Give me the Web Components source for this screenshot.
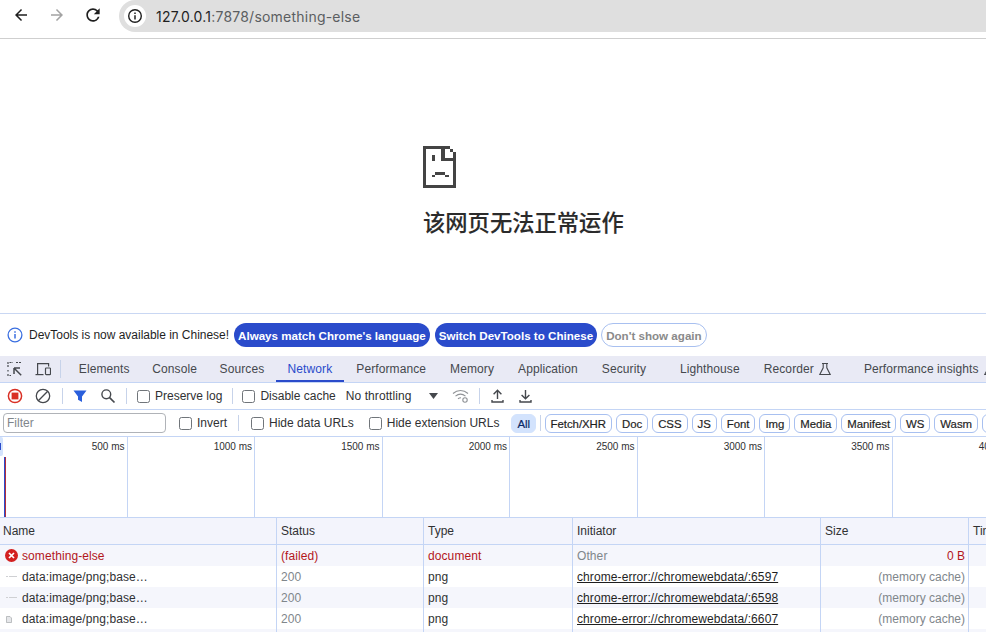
<!DOCTYPE html>
<html lang="en">
<head>
<meta charset="utf-8">
<title>something-else</title>
<style>
  html, body { margin: 0; height: 100%; background: #fff; overflow: hidden; }
  body { display: flex; flex-direction: column; width: 986px; height: 632px; font: 12px "Liberation Sans", Arial, sans-serif; color: #1f1f1f; }
</style>
</head>
<body>
<browser-bar url-host="127.0.0.1" url-rest=":7878/something-else"></browser-bar>
<error-page>该网页无法正常运作</error-page>
<info-bar></info-bar>
<dt-tabs></dt-tabs>
<net-toolbar></net-toolbar>
<net-filter></net-filter>
<net-overview></net-overview>
<net-table></net-table>

<script>
// small helper, every element just sets its own shadow markup
function shadow(el, css, html) {
  el.attachShadow({ mode: 'open' }).innerHTML = '<style>' + css + '</style>' + html;
}

class DtCheck extends HTMLElement {
  connectedCallback() {
    shadow(this, `
      :host { display: inline-flex; align-items: center; gap: 5px; white-space: nowrap; color: #303133; }
      i { display: block; width: 11px; height: 11px; border: 1px solid #70757a; border-radius: 2.5px; background: #fff; }
    `, '<i></i><slot></slot>');
  }
}
customElements.define('dt-check', DtCheck);

class TypeChip extends HTMLElement {
  connectedCallback() {
    shadow(this, `
      :host { display: block; flex: none; box-sizing: border-box; height: 19px; line-height: 18px; padding: 0 5px; border: 1px solid #a8c0f0; border-radius: 6px;
        font-size: 11.4px; letter-spacing: -0.03px; color: #1f1f1f; -webkit-text-stroke: 0.2px #1f1f1f; background: #fff; white-space: nowrap; }
      :host([on]) { background: #d3e3fd; border-color: #d3e3fd; color: #0b2a66; -webkit-text-stroke-color: #0b2a66; }
    `, '<slot></slot>');
  }
}
customElements.define('type-chip', TypeChip);

class BrowserBar extends HTMLElement {
  connectedCallback() {
    const host = this.getAttribute('url-host'), rest = this.getAttribute('url-rest');
    shadow(this, `
      :host { display: flex; flex: none; height: 38px; border-bottom: 1px solid #cfcfcf; box-sizing: content-box; background: #fff; }
      .nav { flex: none; width: 119px; display: flex; align-items: flex-start; }
      .nav svg { display: block; flex: none; margin-top: 6px; }
      .pill { flex: 1; height: 32px; background: #dfdfdf; border-radius: 16px 0 0 16px; display: flex; align-items: center; padding-left: 5px; }
      .dot { flex: none; width: 22px; height: 22px; border-radius: 50%; background: #fff; display: flex; align-items: center; justify-content: center; margin-right: 10px; }
      .url { font: 14px Inter, "Liberation Sans", sans-serif; color: #5b5e61; white-space: nowrap; letter-spacing: 0.22px; }
      .url b { font-weight: 400; color: #1f1f1f; }
    `, `
      <div class="nav">
        <svg width="18" height="18" viewBox="0 0 24 24" style="margin-left:12px" fill="#1f1f1f"><path d="M20 11H7.83l5.59-5.59L12 4l-8 8 8 8 1.41-1.41L7.83 13H20v-2z"/></svg>
        <svg width="18" height="18" viewBox="0 0 24 24" style="margin-left:18px" fill="#a3a3a3"><path d="M12 4l-1.41 1.41L16.17 11H4v2h12.17l-5.58 5.59L12 20l8-8z"/></svg>
        <svg width="20" height="20" viewBox="0 0 24 24" style="margin-left:17px;margin-top:5px" fill="#1f1f1f"><path d="M17.65 6.35A7.958 7.958 0 0 0 12 4c-4.42 0-7.99 3.58-7.99 8s3.57 8 7.99 8c3.73 0 6.84-2.55 7.73-6h-2.08A5.99 5.99 0 0 1 12 18c-3.31 0-6-2.69-6-6s2.69-6 6-6c1.66 0 3.14.69 4.22 1.78L13 11h7V4l-2.35 2.35z"/></svg>
      </div>
      <div class="pill">
        <div class="dot"><svg width="16" height="16" viewBox="0 0 16 16" fill="none" stroke="#1f1f1f" stroke-width="1.4"><circle cx="8" cy="8" r="6.3"/><path d="M8 7.2v4.2" stroke-width="1.5"/><path d="M8 4.4v1.6" stroke-width="1.5"/></svg></div>
        <div class="url"><b>${host}</b>${rest}</div>
      </div>`);
  }
}
customElements.define('browser-bar', BrowserBar);

class ErrorPage extends HTMLElement {
  connectedCallback() {
    shadow(this, `
      :host { display: block; flex: none; height: 274px; box-sizing: border-box; padding: 107px 0 0 423px; background: #fff; }
      svg { display: block; shape-rendering: crispEdges; }
      h1 { margin: 16px 0 0 0; font: 500 22.3px/34px "Noto Sans CJK SC", "Noto Sans", sans-serif; color: #2b2b2b; -webkit-text-stroke: 0.1px #2b2b2b; white-space: nowrap; }
    `, `
      <svg width="33" height="42" viewBox="0 0 33 42" fill="#444">
        <path d="M0 0h27v3h3v3h3v36H0zM3 3v36h27V15H18.3V3z"/>
        <path d="M21.7 3H27v3h3v6h-8.3z" fill="#fff"/>
        <path d="M9 9h3v6H9z"/>
        <path d="M12.3 26h10v3h-10zM9 29h3.3v2.4H9zM22.3 29h3.4v2.4h-3.4z"/>
      </svg>
      <h1><slot></slot></h1>`);
  }
}
customElements.define('error-page', ErrorPage);

class InfoBar extends HTMLElement {
  connectedCallback() {
    shadow(this, `
      :host { display: flex; flex: none; align-items: center; height: 43px; box-sizing: border-box; border-top: 1px solid #c9d7f3; background: #fff; padding-left: 7px; }
      svg { display: block; flex: none; margin-right: 6px; }
      span { color: #1f1f1f; white-space: nowrap; margin-right: 5px; letter-spacing: -0.02px; }
      button { flex: none; height: 24px; box-sizing: border-box; padding: 0 4px; margin: 0 5px 0 0; border: 0; border-radius: 12px; background: #2a4bcb; color: #fff;
        font: 700 11.6px "Liberation Sans", Arial, sans-serif; white-space: nowrap; }
      button + button { margin-right: 4px; }
      button.plain { background: #fff; color: #8a8a8a; border: 1px solid #a8c0f0; }
    `, `
      <svg width="16" height="16" viewBox="0 0 16 16" fill="none" stroke="#3b6fe0" stroke-width="1.3"><circle cx="8" cy="8" r="6.9"/><path d="M8 7v4.6M8 4.2v1.5" stroke-width="1.5"/></svg>
      <span>DevTools is now available in Chinese!</span>
      <button>Always match Chrome's language</button>
      <button>Switch DevTools to Chinese</button>
      <button class="plain">Don't show again</button>`);
  }
}
customElements.define('info-bar', InfoBar);

class DtTabs extends HTMLElement {
  connectedCallback() {
    shadow(this, `
      :host { display: flex; flex: none; height: 27px; box-sizing: border-box; background: #e9eaf5; border-bottom: 1px solid #c4d5f5; overflow: hidden; white-space: nowrap; }
      .ic { flex: none; display: flex; align-items: center; gap: 12px; padding: 0 9px 0 7px; }
      .sep { flex: none; width: 1px; height: 18px; margin: 4px 6.5px 0 0; background: #c7d3ea; }
      a { flex: none; display: flex; align-items: center; gap: 4px; height: 26px; box-sizing: border-box; padding: 0 11.3px; color: #45484d; letter-spacing: 0.1px; }
      a.on { color: #2a4bcb; border-bottom: 2px solid #2a4bcb; padding: 2px 12px 0; }
      a.on ~ a { padding: 0 12px; }
      a.on ~ a.wide { margin-left: 10px; }
      a.on ~ a.wide.last { margin-left: 8px; }
      svg { display: block; }
    `, `
      <div class="ic">
        <svg width="16" height="16" viewBox="0 0 16 16" fill="none" stroke="#45484d" stroke-width="1.2"><path d="M1 6V1.5h5M9 1.5h5.5M1 9v1.5M1 13v1.5h3" stroke-dasharray="2 1"/><path d="M7 7h6M7 7v6M7.2 7.2l7 7" stroke-width="1.5"/></svg>
        <svg width="16" height="16" viewBox="0 0 16 16" fill="none" stroke="#45484d" stroke-width="1.2"><path d="M2.6 13V2.6h11v3"/><path d="M.5 13.6h8"/><rect x="10.5" y="7" width="5" height="6.6" rx=".8"/></svg>
      </div>
      <div class="sep"></div>
      <a>Elements</a><a>Console</a><a>Sources</a><a class="on">Network</a><a>Performance</a><a>Memory</a><a>Application</a><a>Security</a>
      <a class="wide">Lighthouse</a>
      <a>Recorder <svg width="14" height="14" viewBox="0 0 14 14" fill="none" stroke="#45484d" stroke-width="1.1"><path d="M4 1.5h6M5.2 1.5v4.3L1.8 12.5h10.4L8.8 5.8V1.5"/></svg></a>
      <a class="wide last">Performance insights <svg width="14" height="14" viewBox="0 0 14 14" fill="none" stroke="#45484d" stroke-width="1.1"><path d="M4 1.5h6M5.2 1.5v4.3L1.8 12.5h10.4L8.8 5.8V1.5"/></svg></a>`);
  }
}
customElements.define('dt-tabs', DtTabs);

class NetToolbar extends HTMLElement {
  connectedCallback() {
    shadow(this, `
      :host { display: flex; flex: none; align-items: center; height: 27px; box-sizing: border-box; border-bottom: 1px solid #c4d5f5; background: #fff; padding-left: 7px; white-space: nowrap; }
      svg { display: block; flex: none; }
      .sep { flex: none; width: 1px; height: 16px; background: #c7d3ea; }
      .drop { color: #303133; }
    `, `
      <svg width="16" height="16" viewBox="0 0 16 16"><circle cx="8" cy="8" r="6.6" fill="none" stroke="#d93025" stroke-width="1.5"/><rect x="4.6" y="4.6" width="6.8" height="6.8" fill="#d93025"/></svg>
      <svg style="margin-left:12px" width="16" height="16" viewBox="0 0 16 16" fill="none" stroke="#45484d" stroke-width="1.3"><circle cx="8" cy="8" r="6.7"/><path d="M3.3 12.7 12.7 3.3"/></svg>
      <div class="sep" style="margin-left:11px"></div>
      <svg style="margin-left:9px" width="16" height="16" viewBox="0 0 16 16"><path d="M1.5 2.5h13L10 8.5V14L6 11.8V8.5z" fill="#2a5fdc"/></svg>
      <svg style="margin-left:12px" width="16" height="16" viewBox="0 0 16 16" fill="none" stroke="#45484d" stroke-width="1.4"><circle cx="6.3" cy="6.3" r="4.4"/><path d="M9.6 9.6 14.5 14.5" stroke-width="1.7"/></svg>
      <div class="sep" style="margin-left:10px"></div>
      <dt-check style="margin-left:10px">Preserve log</dt-check>
      <div class="sep" style="margin-left:10px"></div>
      <dt-check style="margin-left:9px">Disable cache</dt-check>
      <span class="drop" style="margin-left:10px;letter-spacing:.08px">No throttling</span>
      <svg style="margin-left:17px" width="9" height="6" viewBox="0 0 9 6"><path d="M0 0h9L4.5 6z" fill="#45484d"/></svg>
      <svg style="margin-left:14px" width="18" height="16" viewBox="0 0 18 16" fill="none" stroke="#8f9296" stroke-width="1.1"><path d="M1 5.5C5.5 1.5 11.5 1.5 16 5.5M3.5 8.2C6.5 5.7 10.5 5.7 13.5 8.2M6 10.8C7 10 8 9.8 9 9.8"/><circle cx="13" cy="12" r="2.2"/></svg>
      <div class="sep" style="margin-left:9px"></div>
      <svg style="margin-left:10px" width="15" height="16" viewBox="0 0 15 16" fill="none" stroke="#45484d" stroke-width="1.4"><path d="M7.5 11V2.5M3.6 6.2 7.5 2.3l3.9 3.9M2 12v2h11v-2"/></svg>
      <svg style="margin-left:13px" width="15" height="16" viewBox="0 0 15 16" fill="none" stroke="#45484d" stroke-width="1.4"><path d="M7.5 2v8.6M3.6 6.9l3.9 3.9 3.9-3.9M2 12v2h11v-2"/></svg>`);
  }
}
customElements.define('net-toolbar', NetToolbar);

class NetFilter extends HTMLElement {
  connectedCallback() {
    shadow(this, `
      :host { display: flex; flex: none; align-items: center; height: 27px; box-sizing: border-box; border-bottom: 1px solid #c4d5f5; background: #fff; padding-left: 3px; white-space: nowrap; overflow: hidden; }
      .inp { flex: none; box-sizing: border-box; width: 163px; height: 20px; line-height: 18px; border: 1px solid #b0b3b8; border-radius: 4px; padding-left: 3px; color: #80868b; }
      .sep { flex: none; width: 1px; height: 16px; background: #c7d3ea; }
      .chips { display: flex; gap: 4px; margin-left: 10px; align-items: center; }
    `, `
      <div class="inp">Filter</div>
      <dt-check style="margin-left:13px">Invert</dt-check>
      <div class="sep" style="margin-left:11px"></div>
      <dt-check style="margin-left:12px">Hide data URLs</dt-check>
      <dt-check style="margin-left:15px">Hide extension URLs</dt-check>
      <type-chip on style="margin-left:12px">All</type-chip>
      <div class="sep" style="margin-left:4px"></div>
      <div class="chips" style="margin-left:3.5px">
        <type-chip>Fetch/XHR</type-chip><type-chip>Doc</type-chip><type-chip>CSS</type-chip><type-chip>JS</type-chip><type-chip>Font</type-chip><type-chip>Img</type-chip><type-chip>Media</type-chip><type-chip>Manifest</type-chip><type-chip>WS</type-chip><type-chip>Wasm</type-chip><type-chip>Other</type-chip>
      </div>`);
  }
}
customElements.define('net-filter', NetFilter);

class NetOverview extends HTMLElement {
  connectedCallback() {
    const cells = [500, 1000, 1500, 2000, 2500, 3000, 3500, 4000]
      .map(ms => `<div class="cell">${ms} ms</div>`).join('');
    shadow(this, `
      :host { display: flex; flex: none; position: relative; height: 81px; box-sizing: border-box; border-bottom: 1px solid #c4d5f5; background: #fff; overflow: hidden; }
      .cell { flex: none; width: 127.5px; box-sizing: border-box; border-right: 1px solid #c4d5f5; padding: 4px 2px 0 0; text-align: right; font-size: 10px; line-height: 12px; color: #303133; white-space: nowrap; }
      .cell:first-child { margin-left: -1px; }
      .handle { position: absolute; left: -2px; top: 0; width: 5px; height: 19px; background: #d3e3fd; border-radius: 2px; }
      .handle::after { content: ""; position: absolute; left: 0; top: 6px; width: 3px; height: 7px; background: #2a4bcb; }
      .bar { position: absolute; left: 4px; top: 20px; bottom: 0; width: 1px; background: #2a4bcb; border-right: 1px solid #b03040; }
    `, cells + '<div class="handle"></div><div class="bar"></div>');
  }
}
customElements.define('net-overview', NetOverview);

class NetRow extends HTMLElement {
  connectedCallback() {
    const a = n => this.getAttribute(n);
    const icons = {
      err: '<svg width="13" height="13" viewBox="0 0 13 13"><circle cx="6.5" cy="6.5" r="6.5" fill="#d32020"/><path d="M4 4l5 5M9 4 4 9" stroke="#fff" stroke-width="1.7"/></svg>',
      line: '<svg width="13" height="13" viewBox="0 0 13 13"><path d="M1 6.5h2M4 6.5h8" stroke="#cfd0d3"/></svg>',
      doc: '<svg width="13" height="13" viewBox="0 0 13 13"><path d="M1.5 4.5h3.5l1.5 1.5v4.5h-5z" fill="#e6e7ea" stroke="#a5a7aa" stroke-width=".7"/></svg>'
    };
    shadow(this, `
      :host { display: grid; grid-template-columns: 277px 147px 149px 248px 148px 1fr; height: 21px; line-height: 22px; color: #303133; background: #fff; white-space: nowrap; letter-spacing: 0.09px; }
      :host([alt]) { background: #f5f6fc; }
      div { box-sizing: border-box; height: 21px; padding-left: 4px; border-right: 1px solid #c4d5f5; overflow: hidden; }
      div:last-child { border-right: 0; }
      .name { display: flex; align-items: center; padding-left: 5px; gap: 4px; }
      .name svg { display: block; flex: none; }
      .dim { color: #80868b; }
      .size { text-align: right; padding: 0 3px 0 0; color: #80868b; letter-spacing: 0; }
      .link { text-decoration: underline; color: #1f1f1f; }
      :host([err]) .name, :host([err]) .red { color: #b3161b; }
      :host([err]) .size { color: #b3161b; }
    `, `
      <div class="name">${icons[a('icon')]}<span>${a('name')}</span></div>
      <div class="${a('err') !== null ? 'red' : 'dim'}">${a('status')}</div>
      <div class="${a('err') !== null ? 'red' : ''}">${a('type')}</div>
      <div class="${a('err') !== null ? 'dim' : 'link'}">${a('init')}</div>
      <div class="size">${a('size')}</div>
      <div></div>`);
  }
}
customElements.define('net-row', NetRow);

class NetTable extends HTMLElement {
  connectedCallback() {
    shadow(this, `
      :host { display: block; flex: 1; min-height: 0; overflow: hidden; background: #fff; }
      .head { display: grid; grid-template-columns: 277px 147px 149px 248px 148px 1fr; height: 27px; line-height: 26px; box-sizing: border-box; border-bottom: 1px solid #c4d5f5; background: #f3f4fc; color: #303133; white-space: nowrap; }
      .head div { box-sizing: border-box; padding-left: 4px; border-right: 1px solid #c4d5f5; }
      .head div:first-child { padding-left: 3px; }
      .head div:last-child { border-right: 0; }
    `, `
      <div class="head"><div>Name</div><div>Status</div><div>Type</div><div>Initiator</div><div>Size</div><div>Time</div></div>
      <net-row err alt icon="err" name="something-else" status="(failed)" type="document" init="Other" size="0 B"></net-row>
      <net-row icon="line" name="data:image/png;base…" status="200" type="png" init="chrome-error://chromewebdata/:6597" size="(memory cache)"></net-row>
      <net-row alt icon="line" name="data:image/png;base…" status="200" type="png" init="chrome-error://chromewebdata/:6598" size="(memory cache)"></net-row>
      <net-row icon="doc" name="data:image/png;base…" status="200" type="png" init="chrome-error://chromewebdata/:6607" size="(memory cache)"></net-row>
      <net-row alt icon="line" name="" status="" type="" init="" size=""></net-row>`);
  }
}
customElements.define('net-table', NetTable);
</script>
</body>
</html>
